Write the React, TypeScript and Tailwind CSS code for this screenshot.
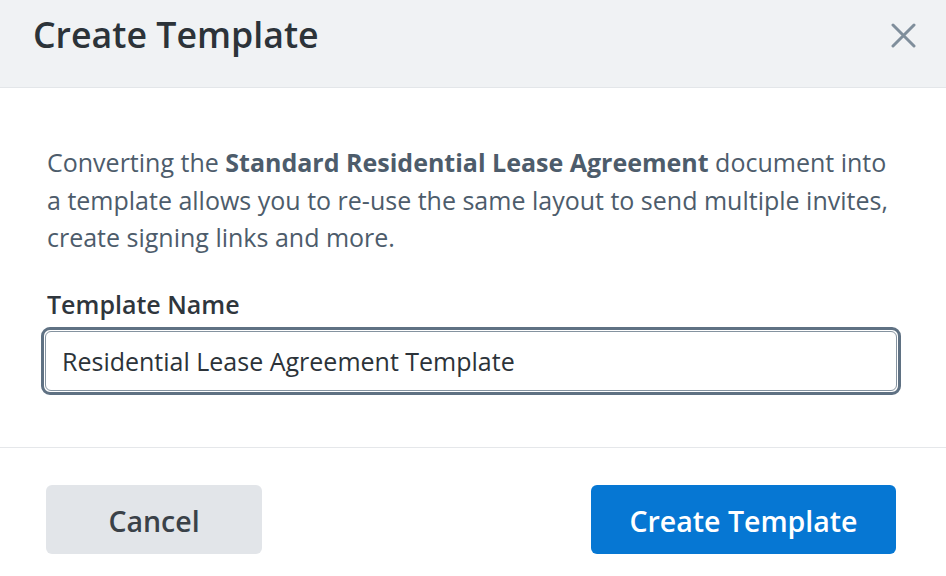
export default function App() {
  return (
    <div className="h-[576px] w-[946px] overflow-hidden bg-white font-['Open_Sans',sans-serif]">
      {/* Header */}
      <div className="flex h-[88px] items-start justify-between border-b border-[#e3e6e9] bg-[#f0f2f4] pl-[33px] pr-[30px] pt-[17px]">
        <h1 className="text-[35.7px] font-semibold leading-none text-[#2c3339]">Create Template</h1>
        <button className="mt-[6px] text-[#7f8e9b]" aria-label="Close">
          <svg width="25" height="25" viewBox="0 0 25 25" fill="none">
            <path d="M2 2 L23 23 M23 2 L2 23" stroke="currentColor" strokeWidth="3" strokeLinecap="round" />
          </svg>
        </button>
      </div>

      {/* Body */}
      <div className="border-b border-[#e5e7ea] pb-[52px] pl-[41px] pr-[45px] pt-[56px]">
        <p className="pl-[6px] text-[25px] leading-[37.5px] text-[#4d5c6b]">
          Converting the <span className="font-bold">Standard Residential Lease Agreement</span> document into
          a template allows you to re-use the same layout to send multiple invites, create signing links and
          more.
        </p>
        <label className="mt-[29px] block pl-[6px] text-[25px] font-semibold leading-[37.5px] text-[#2f363d]">
          Template Name
        </label>
        <div className="mt-[4px] rounded-[9px] border-[3px] border-[#5f7183] p-[1px]">
          <input
            className="block h-[60px] w-full rounded-[6px] border border-[#8593a0] bg-white px-[16px] text-[25px] text-[#2c3339] outline-none"
            defaultValue="Residential Lease Agreement Template"
          />
        </div>
      </div>

      {/* Footer */}
      <div className="flex justify-between pl-[46px] pr-[50px] pt-[37px]">
        <button className="h-[69px] w-[216px] rounded-[6px] bg-[#e2e5e9] pt-[3px] text-[28.5px] font-semibold text-[#3a4148]">
          Cancel
        </button>
        <button className="h-[69px] w-[305px] rounded-[6px] bg-[#0677d3] pt-[3px] text-[28.5px] font-semibold text-white">
          Create Template
        </button>
      </div>
    </div>
  );
}
